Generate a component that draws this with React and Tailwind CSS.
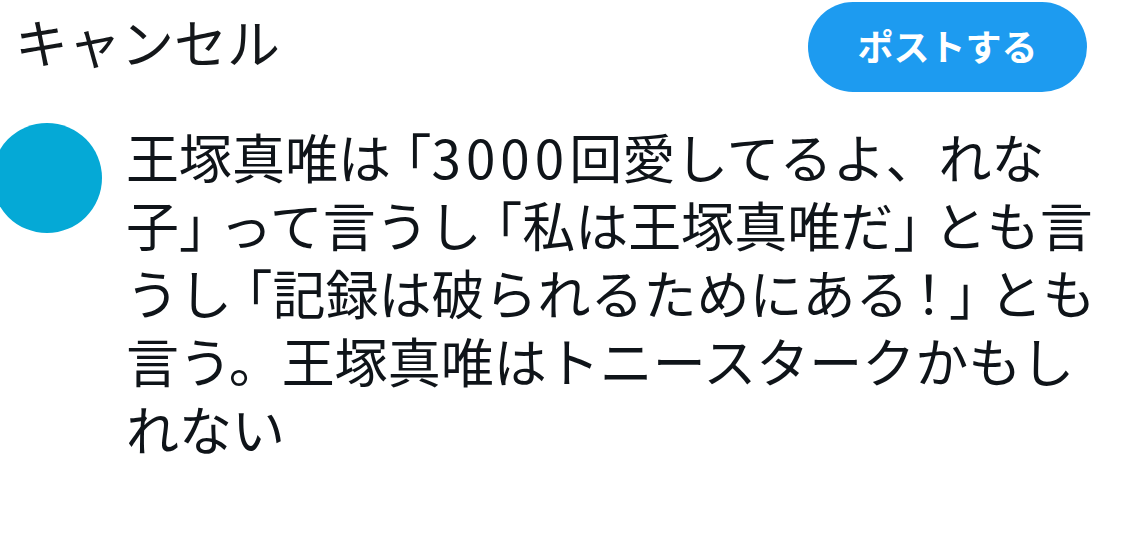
export default function App() {
  const open = "[font-feature-settings:'halt'] pl-[14px]";
  const close = "[font-feature-settings:'halt'] pr-[14px]";
  return (
    <div
      className="w-[1134px] h-[538px] bg-white overflow-hidden text-[#0f1419]"
      style={{ fontFamily: '"Noto Sans CJK JP", "Noto Sans", sans-serif' }}
    >
      <div className="flex items-center justify-between pl-[15px] pr-[47px] pt-[2px]">
        <button className="text-[53px] leading-none text-[#14171a] pb-[12px]">キャンセル</button>
        <button className="h-[90px] w-[279px] rounded-full bg-[#1d9bf0] text-white text-[36px] font-bold pb-[4px]">
          ポストする
        </button>
      </div>

      <div className="flex gap-6 mt-[30px]">
        <div className="w-[110px] h-[110px] rounded-full bg-[#05a9d6] shrink-0 -ml-2 mt-px" />
        <p className="text-[53px] leading-[68px] whitespace-nowrap">
          王塚真唯は<span className={open}>「</span>
          <span className="tracking-[5px]">3000</span>回愛してるよ、れな
          <br />
          子<span className={close}>」</span>って言うし<span className={open}>「</span>私は王塚真唯だ
          <span className={close}>」</span>とも言
          <br />
          うし<span className={open}>「</span>記録は破られるためにある<span className="[font-feature-settings:'halt'] px-[7px]">！</span>
          <span className={close}>」</span>とも
          <br />
          言う。王塚真唯はトニースタークかもし
          <br />
          れない
        </p>
      </div>
    </div>
  );
}
